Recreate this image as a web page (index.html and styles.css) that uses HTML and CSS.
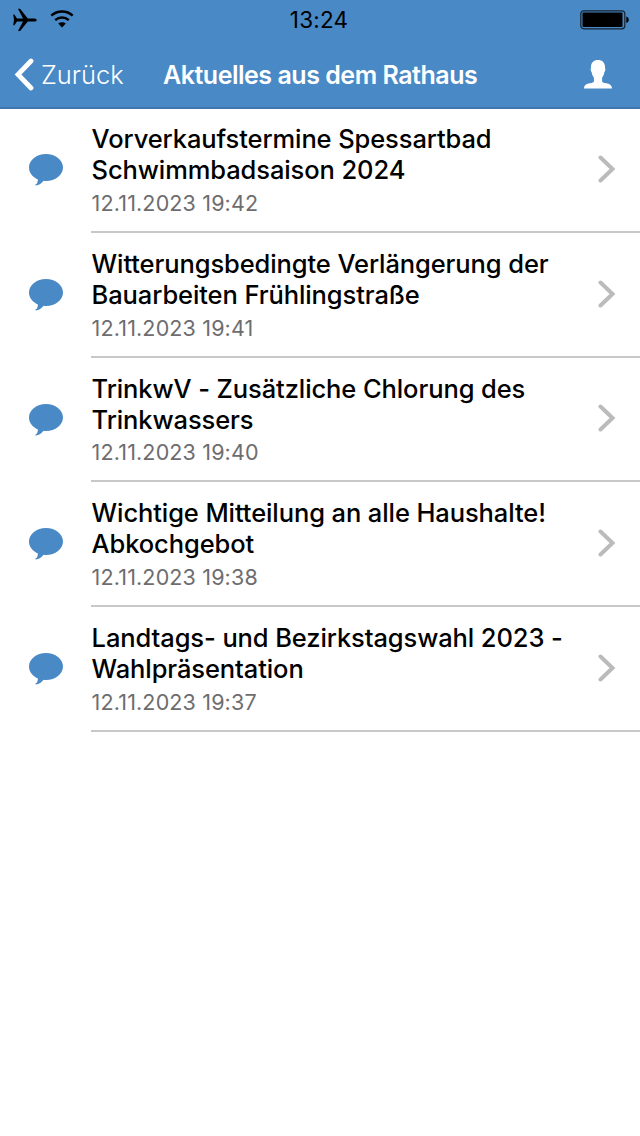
FILE: index.html
```
<!DOCTYPE html>
<html lang="de">
<head>
  <meta charset="UTF-8" />
  <title>Aktuelles aus dem Rathaus</title>
  <meta name="viewport" content="width=device-width, initial-scale=1" />
  <link rel="stylesheet" href="styles.css">
</head>
<body>

  <svg class="symbols" width="0" height="0">
    <symbol id="bubble" viewBox="0 0 34 32">
      <path d="M17 0C26.400 0 34 6 34 13.500S26.400 27 17 27c-.9 0-1.700 0-2.500-.2-1.800 2.700-4.500 4.600-7.800 4.600-.5 0-.5-.6 0-.9 1.500-1.100 2.200-3 2.200-5.100C3.500 23.200 0 18.800 0 13.500 0 6 7.600 0 17 0z" />
    </symbol>
    <symbol id="chevron" viewBox="0 0 18 28">
      <path d="M2.500 2.500L14.500 14 2.500 25.500" />
    </symbol>
  </svg>

  <header>
    <div class="status">
      <div class="signals">
        <svg width="24" height="24" viewBox="0 0 24 24">
          <path d="M.2 6.500h1.200l2.600 3.900h6L5 .8h2.100l7.700 9.600h6.500c1.500 0 2.500.8 2.500 1.600s-1 1.600-2.500 1.600h-6.500l-7.700 9.500H5l5-9.500H4l-2.600 3.700H.2l.8-5.300z" />
        </svg>
        <svg class="wifi" width="24" height="18" viewBox="0 0 24 18">
          <path class="arc" d="M1.300 5.600C7.300.1 16.700.1 22.700 5.600" />
          <path class="arc" d="M5.200 10.100c3.900-3.500 9.700-3.500 13.600 0" />
          <path d="M8.200 13.500c2.200-1.800 5.400-1.800 7.600 0L12 17.500z" />
        </svg>
      </div>
      <div class="clock">13:24</div>
      <div class="battery">
        <svg width="50" height="20" viewBox="0 0 50 20">
          <rect x=".8" y=".8" width="44" height="18" rx="3" fill="none" stroke="#17222f" stroke-width="1.200" />
          <rect x="2.500" y="2.500" width="40" height="14.500" rx="1" />
          <path d="M46.300 6.500c3.300.8 3.300 5.700 0 6.500z" />
        </svg>
      </div>
    </div>

    <nav>
      <a class="back">
        <svg width="20" height="34" viewBox="0 0 20 34"><path d="M17 3L4 16.500 17 30" /></svg>
        <span>Zurück</span>
      </a>
      <h1>Aktuelles aus dem Rathaus</h1>
      <svg class="user" width="28" height="29" viewBox="0 0 28 29">
        <path d="M14 0c4.500 0 7 2.700 7 7 0 1 .4 1.500.3 3-.1 1.300-.9 1.600-1 2.500-.4 2.200-1 3.700-2.200 5v3.700c0 1 1.700 1.600 4 2 3.600.6 5.900 2 5.900 5.300H0c0-3.300 2.300-4.700 5.900-5.300 2.300-.4 4-1 4-2v-3.700c-1.200-1.300-1.800-2.800-2.200-5-.1-.9-.9-1.200-1-2.500-.1-1.500.3-2 .3-3 0-4.300 2.500-7 7-7z" />
      </svg>
    </nav>
  </header>

  <ul class="news">
    <li>
      <svg class="bubble"><use href="#bubble" /></svg>
      <div class="entry">
        <div class="text">
          <h2>Vorverkaufstermine Spessartbad<br>Schwimmbadsaison 2024</h2>
          <time>12.11.2023 19:42</time>
        </div>
        <svg class="chevron"><use href="#chevron" /></svg>
      </div>
    </li>
    <li>
      <svg class="bubble"><use href="#bubble" /></svg>
      <div class="entry">
        <div class="text">
          <h2>Witterungsbedingte Verlängerung der<br>Bauarbeiten Frühlingstraße</h2>
          <time>12.11.2023 19:41</time>
        </div>
        <svg class="chevron"><use href="#chevron" /></svg>
      </div>
    </li>
    <li>
      <svg class="bubble"><use href="#bubble" /></svg>
      <div class="entry">
        <div class="text">
          <h2>TrinkwV - Zusätzliche Chlorung des<br>Trinkwassers</h2>
          <time>12.11.2023 19:40</time>
        </div>
        <svg class="chevron"><use href="#chevron" /></svg>
      </div>
    </li>
    <li>
      <svg class="bubble"><use href="#bubble" /></svg>
      <div class="entry">
        <div class="text">
          <h2>Wichtige Mitteilung an alle Haushalte!<br>Abkochgebot</h2>
          <time>12.11.2023 19:38</time>
        </div>
        <svg class="chevron"><use href="#chevron" /></svg>
      </div>
    </li>
    <li>
      <svg class="bubble"><use href="#bubble" /></svg>
      <div class="entry">
        <div class="text">
          <h2>Landtags- und Bezirkstagswahl 2023 -<br>Wahlpräsentation</h2>
          <time>12.11.2023 19:37</time>
        </div>
        <svg class="chevron"><use href="#chevron" /></svg>
      </div>
    </li>
  </ul>

</body>
</html>
```
FILE: styles.css
```
* {
  box-sizing: border-box;
}
body {
  margin: 0;
  min-height: 100vh;
  background: #fff;
  color: #000;
  font-family: Inter, "Liberation Sans", sans-serif;
}
svg {
  display: block;
  flex: none;
}
.symbols {
  position: absolute;
}
header {
  height: 109px;
  background: #4889c6;
  border-bottom: 2px solid #3f77ac;
}
.status {
  display: grid;
  grid-template-columns: 1fr auto 1fr;
  align-items: center;
  height: 40px;
  padding: 0 10px 0 13px;
}
.signals {
  display: flex;
  align-items: center;
  gap: 14px;
}
.wifi {
  margin-left: -1px;
  margin-top: -2px;
}
.arc {
  fill: none;
  stroke: #000;
  stroke-width: 2.4;
}
.clock {
  margin-right: 5px;
  font-size: 22.5px;
  line-height: 40px;
  letter-spacing: 0.2px;
}
.battery {
  justify-self: end;
}
nav {
  display: flex;
  align-items: center;
  height: 68px;
  padding: 1px 28px 0 14px;
  color: #fff;
}
.back {
  display: flex;
  align-items: center;
  width: 149px;
  gap: 7px;
  font-size: 25.5px;
  font-weight: 350;
}
.back path {
  fill: none;
  stroke: #fff;
  stroke-width: 4.8;
  stroke-linecap: round;
}
h1 {
  flex: 1;
  margin: 0;
  font-size: 25px;
  font-weight: 600;
  letter-spacing: -0.48px;
  white-space: nowrap;
}
.user {
  fill: #fff;
}
.news {
  margin: 0;
  padding: 0;
  list-style: none;
}
.news li {
  display: flex;
  height: 125px;
}
.news li:first-child {
  height: 124px;
}
.news li:nth-child(3) {
  height: 124px;
}
.bubble {
  width: 34px;
  height: 32px;
  margin: 46px 28.5px 0;
  fill: #4889c6;
}
.news li:first-child .bubble {
  margin-top: 45px;
}
.entry {
  display: flex;
  flex: 1;
  align-items: flex-end;
  justify-content: space-between;
  padding: 0 24px 0 0;
  border-bottom: 2px solid #c8c8ca;
}
h2 {
  margin: 0 0 2px;
  font-size: 25.5px;
  font-weight: 450;
  letter-spacing: -0.1px;
  line-height: 31px;
  white-space: nowrap;
}
.news li:nth-child(3) h2 {
  margin-bottom: 1px;
}
time {
  display: block;
  margin-bottom: 12px;
  color: #6d6d6f;
  font-size: 21.5px;
  letter-spacing: 0.15px;
  line-height: 32px;
}
.text {
  padding-left: 0.6px;
}
.chevron {
  width: 18px;
  height: 28px;
  margin-bottom: 48px;
  fill: none;
  stroke: #bbb;
  stroke-width: 4;
  stroke-linecap: round;
}
```
